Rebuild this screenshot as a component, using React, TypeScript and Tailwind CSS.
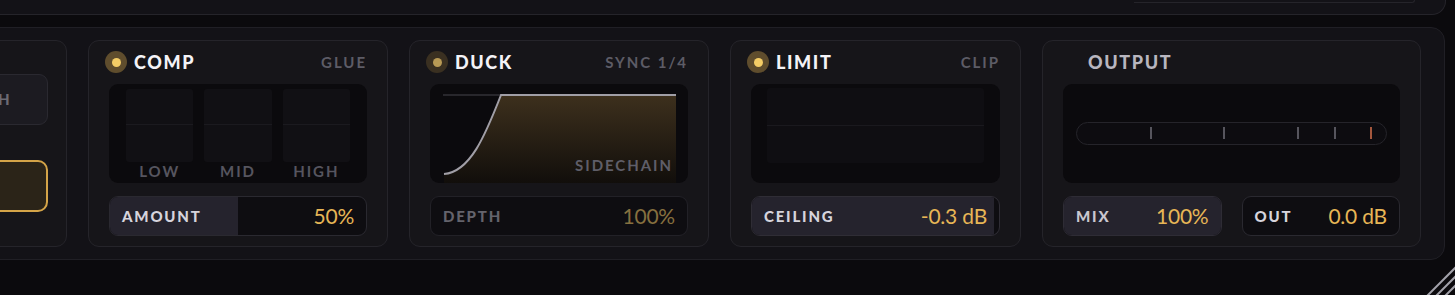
import type { ReactNode } from 'react';

const cardCls = 'flex h-[207px] shrink-0 flex-col rounded-[11px] border border-[#25242a] bg-[#161519]';

function Led({ on = true, hidden = false }: { on?: boolean; hidden?: boolean }) {
  if (hidden) return <div className="h-[22px] w-[22px] shrink-0" />;
  return (
    <div
      className={
        'flex h-[22px] w-[22px] shrink-0 items-center justify-center rounded-full ' +
        (on ? 'bg-[#5f4d2d]' : 'bg-[#3a3021]')
      }
    >
      <div className={'h-[9px] w-[9px] rounded-full ' + (on ? 'bg-[#f4cd66]' : 'bg-[#b89a55]')} />
    </div>
  );
}

function Header({ title, tag, on = true, led = true, titleCls = 'text-[#f4f3f7]' }: {
  title: string;
  tag?: string;
  on?: boolean;
  led?: boolean;
  titleCls?: string;
}) {
  return (
    <div className="mt-[10px] flex h-[22px] items-center pl-[16px] pr-[20px]">
      <Led on={on} hidden={!led} />
      <span className={'ml-[7px] text-[18px] font-black tracking-[0.09em] ' + titleCls}>{title}</span>
      {tag && <span className="ml-auto text-[15px] font-bold tracking-[0.13em] text-[#5d5c66]">{tag}</span>}
    </div>
  );
}

function Field({ label, value, fill, dim = false, labelCls = 'text-[#d6d4dc]', className = '' }: {
  label: string;
  value: string;
  fill: string;
  dim?: boolean;
  labelCls?: string;
  className?: string;
}) {
  return (
    <div
      className={
        'relative flex h-[40px] items-center overflow-hidden rounded-[9px] border border-[#2a2930] bg-[#0e0d11] px-[12px] ' +
        className
      }
    >
      <div className="absolute inset-y-0 left-0 bg-[#25232d]" style={{ width: fill }} />
      <span className={'relative text-[15px] font-black tracking-[0.12em] ' + labelCls}>{label}</span>
      <span
        className={
          'relative ml-auto text-[21px] tracking-[-0.01em] ' + (dim ? 'text-[#86703f]' : 'text-[#e7b656]')
        }
      >
        {value}
      </span>
    </div>
  );
}

function Display({ children, className = '' }: { children?: ReactNode; className?: string }) {
  return (
    <div className={'mx-[20px] mt-[11px] h-[99px] rounded-[9px] bg-[#0b0a0d] ' + className}>{children}</div>
  );
}

function Comp() {
  return (
    <div className={cardCls + ' w-[300px]'}>
      <Header title="COMP" tag="GLUE" />
      <Display className="px-[17px] pt-[5px]">
        <div className="grid grid-cols-3 gap-[11px]">
          {['LOW', 'MID', 'HIGH'].map((b) => (
            <div key={b} className="flex h-[73px] flex-col rounded-[3px] bg-[#111014]">
              <div className="h-[36px] border-b border-[#1b1a1f]" />
            </div>
          ))}
        </div>
        <div className="mt-[0px] grid grid-cols-3 gap-[11px] text-center text-[15px] leading-[18px] font-bold tracking-[0.13em] text-[#56555f]">
          <span>LOW</span>
          <span>MID</span>
          <span>HIGH</span>
        </div>
      </Display>
      <Field label="AMOUNT" value="50%" fill="50%" className="mx-[20px] mt-[13px]" />
    </div>
  );
}

function Duck() {
  return (
    <div className={cardCls + ' w-[300px]'}>
      <Header title="DUCK" tag="SYNC 1/4" on={false} />
      <Display className="relative flex items-end justify-end overflow-hidden pb-[7px] pr-[15px]">
        <svg className="absolute inset-0" width="259" height="99" viewBox="0 0 259 99">
          <defs>
            <linearGradient id="duckFill" x1="0" y1="0" x2="0" y2="1">
              <stop offset="0" stopColor="#3d301d" />
              <stop offset="1" stopColor="#110e0b" />
            </linearGradient>
          </defs>
          <path d="M14 90 C40 88 55 52 71 11 L246 11 L246 99 L14 99 Z" fill="url(#duckFill)" />
          <line x1="13" y1="11" x2="71" y2="11" stroke="#46454c" strokeWidth="1" />
          <path d="M14 90 C40 88 55 52 71 11 L246 11" fill="none" stroke="#a09ea6" strokeWidth="2" />
        </svg>
        <span className="relative text-[15px] font-bold tracking-[0.13em] text-[#5f5e68]">SIDECHAIN</span>
      </Display>
      <Field
        label="DEPTH"
        value="100%"
        fill="0%"
        dim
        labelCls="text-[#64636c]"
        className="mx-[20px] mt-[13px] border-[#222127]"
      />
    </div>
  );
}

function Limit() {
  return (
    <div className={cardCls + ' w-[291px]'}>
      <Header title="LIMIT" tag="CLIP" />
      <Display className="px-[16px] pt-[4px]">
        <div className="h-[75px] rounded-[3px] bg-[#0f0e12]">
          <div className="h-[38px] border-b border-[#1a191e]" />
        </div>
      </Display>
      <Field label="CEILING" value="-0.3 dB" fill="98%" className="mx-[20px] mt-[13px] border-[#2f2d35]" />
    </div>
  );
}

function Output() {
  const ticks = [
    { at: 74, c: 'bg-[#56555d]' },
    { at: 147, c: 'bg-[#56555d]' },
    { at: 221, c: 'bg-[#56555d]' },
    { at: 258, c: 'bg-[#56555d]' },
    { at: 294, c: 'bg-[#a4573d]' },
  ];
  return (
    <div className={cardCls + ' w-[379px]'}>
      <Header title="OUTPUT" led={false} titleCls="text-[#b8b6bf]" />
      <Display className="flex items-center px-[13px]">
        <div className="relative h-[23px] flex-1 rounded-full border border-[#25242a] bg-[#0d0c10]">
          {ticks.map((t) => (
            <div
              key={t.at}
              className={'absolute top-[4px] h-[12px] w-[2px] ' + t.c}
              style={{ left: t.at - 1 }}
            />
          ))}
        </div>
      </Display>
      <div className="mx-[20px] mt-[13px] grid grid-cols-2 gap-[20px]">
        <Field label="MIX" value="100%" fill="100%" labelCls="text-[#c9c7cf]" className="border-[#2e2c35]" />
        <Field label="OUT" value="0.0 dB" fill="0%" />
      </div>
    </div>
  );
}

export default function App() {
  return (
    <div className="relative h-[295px] w-[1455px] overflow-hidden bg-[#0b0a0d] font-['Lato','Liberation_Sans',sans-serif]">
      <div className="flex h-[15px] w-[1446px] justify-end rounded-br-[14px] border-b border-r border-[#25242a] bg-[#131217]">
        <div className="mr-[30px] h-[3px] w-[281px] rounded-br-[10px] border-b border-r border-[#25242a]" />
      </div>

      <div className="ml-[-30px] mt-[12px] flex h-[233px] w-[1475px] gap-[21px] rounded-[14px] border border-[#201f25] bg-[#131217] pl-[16px] pt-[12px]">
        <div className={cardCls + ' w-[80px] items-end pr-[18px]'}>
          <div className="mt-[33px] flex h-[51px] w-[100px] items-center justify-end rounded-[9px] border border-[#2a2930] bg-[#1c1b21] pr-[36px] text-[15px] font-black tracking-[0.1em] text-[#6b6a73]">
            BOTH
          </div>
          <div className="mt-[35px] h-[52px] w-[100px] rounded-[10px] border-2 border-[#d4a448] bg-[#2b2418]" />
        </div>
        <Comp />
        <Duck />
        <Limit />
        <Output />
      </div>

      <svg className="absolute bottom-0 right-0" width="32" height="34" viewBox="0 0 32 34">
        <line x1="4" y1="35" x2="33" y2="6" stroke="#a3a2aa" strokeWidth="2" />
        <line x1="13" y1="35" x2="33" y2="15" stroke="#a3a2aa" strokeWidth="2" />
        <line x1="22" y1="35" x2="33" y2="24" stroke="#a3a2aa" strokeWidth="2" />
      </svg>
    </div>
  );
}
